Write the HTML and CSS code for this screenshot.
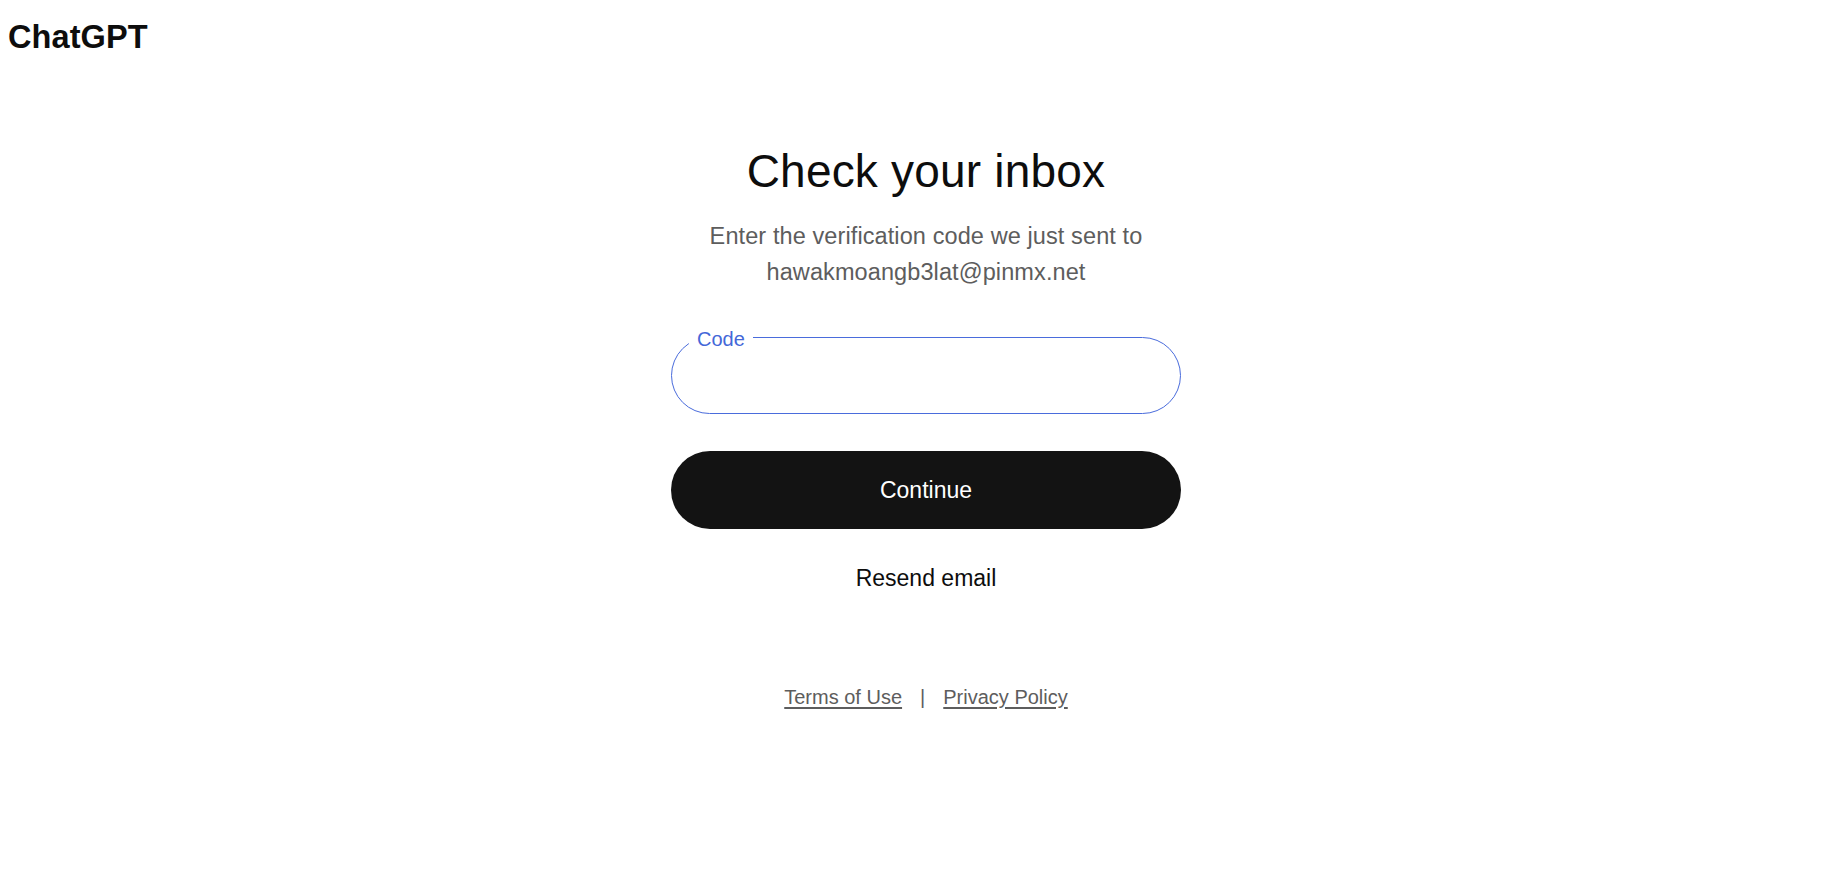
FILE: index.html
```html
<!DOCTYPE html>
<html lang="en">
<head>
<meta charset="UTF-8"/>
<meta name="viewport" content="width=device-width, initial-scale=1.0"/>
<title>Check your inbox | ChatGPT</title>
<link rel="stylesheet" href="styles.css">
</head>
<body>

<header class="topbar">
  <a class="brand" href="#">ChatGPT</a>
</header>

<main class="page">
  <section class="verify">
    <h1>Check your inbox</h1>
    <p class="lead">Enter the verification code we just sent to<br>hawakmoangb3lat@pinmx.net</p>

    <form class="verify-form">
      <div class="field">
        <input type="text" id="code" name="code" inputmode="numeric" autocomplete="one-time-code" autofocus>
        <label for="code">Code</label>
      </div>
      <button type="submit" class="btn-continue">Continue</button>
      <button type="button" class="btn-resend">Resend email</button>
    </form>

    <footer class="legal">
      <a href="#">Terms of Use</a>
      <span class="sep">|</span>
      <a href="#">Privacy Policy</a>
    </footer>
  </section>
</main>

</body>
</html>
```

FILE: styles.css
```css
*{box-sizing:border-box;margin:0;padding:0;}
body{font-family:"Liberation Sans",Arial,sans-serif;background:#fff;color:#0d0d0d;}
a{color:inherit;}

.topbar{padding:17px 8px 0;height:57px;}
.brand{display:inline-block;font-size:32.5px;line-height:40px;font-weight:700;letter-spacing:0.1px;color:#0d0d0d;text-decoration:none;}

.page{display:flex;justify-content:center;padding-left:15px;}
.verify{width:510px;display:flex;flex-direction:column;align-items:center;text-align:center;padding-top:86px;}
.verify h1{font-size:46px;line-height:56px;font-weight:400;color:#0d0d0d;letter-spacing:0.2px;}
.lead{margin-top:19px;font-size:23.5px;line-height:36px;letter-spacing:0.1px;color:#5d5d5d;}

.verify-form{width:100%;display:flex;flex-direction:column;align-items:center;margin-top:47px;}
.field{position:relative;width:100%;}
.field input{width:100%;height:77px;border:1px solid #4a6cdc;border-radius:40px;padding:0 24px;font-family:inherit;font-size:21px;color:#0d0d0d;outline:none;background:#fff;}
.field label{position:absolute;top:-8px;left:18px;padding:0 8px;background:#fff;color:#4467d8;font-size:20px;line-height:20px;pointer-events:none;}

.btn-continue{width:100%;height:78px;margin-top:37px;border:none;border-radius:40px;background:#131313;color:#fff;font-family:inherit;font-size:23px;cursor:pointer;}
.btn-resend{margin-top:35px;border:none;background:none;color:#0d0d0d;font-family:inherit;font-size:23px;line-height:28px;cursor:pointer;}

.legal{display:flex;align-items:center;gap:18px;margin-top:93px;font-size:20px;line-height:24px;color:#5d5d5d;}
.legal a{color:#5d5d5d;text-decoration:underline;text-decoration-thickness:1.5px;text-underline-offset:3px;}
```
